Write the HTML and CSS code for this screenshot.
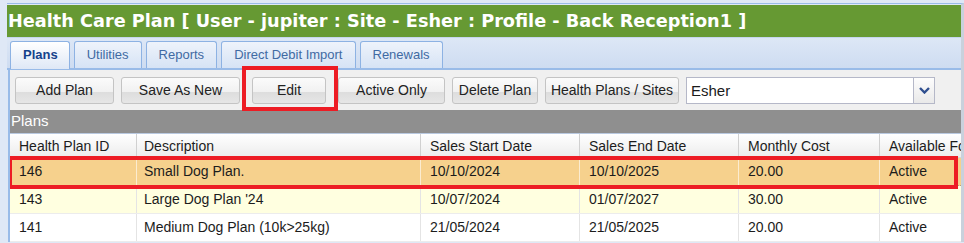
FILE: index.html
```html
<!DOCTYPE html>
<html lang="en">

<head>
  <meta charset="UTF-8">
  <meta name="viewport" content="width=device-width, initial-scale=1.0">
  <title>Health Care Plan</title>
  <link rel="stylesheet" href="styles.css">
</head>

<body>
<div id="hcp-window">
  <div class="title-bar">Health Care Plan [ User - jupiter : Site - Esher : Profile - Back Reception1 ]</div>

  <div class="tab-strip">
    <div class="tab active">Plans</div>
    <div class="tab">Utilities</div>
    <div class="tab">Reports</div>
    <div class="tab">Direct Debit Import</div>
    <div class="tab">Renewals</div>
  </div>

  <div class="panel-body">
    <div class="toolbar">
      <button class="btn btn-add">Add Plan</button>
      <button class="btn btn-save">Save As New</button>
      <button class="btn btn-edit">Edit</button>
      <button class="btn btn-active">Active Only</button>
      <button class="btn btn-delete">Delete Plan</button>
      <button class="btn btn-sites">Health Plans / Sites</button>
      <div class="combo">
        <span class="combo-value">Esher</span>
        <span class="combo-trigger">
          <svg width="11" height="7" viewBox="0 0 11 7"><path d="M1 1 L5.5 5.5 L10 1" fill="none" stroke="#2f4f8f" stroke-width="2.4"/></svg>
        </span>
      </div>
      <!-- highlight around Edit -->
      <div class="mark mark-edit"></div>
    </div>

    <div class="grid-title">Plans</div>

    <div class="grid">
      <div class="grid-row grid-head">
        <div class="cell c-id">Health Plan ID</div>
        <div class="cell c-desc">Description</div>
        <div class="cell c-date">Sales Start Date</div>
        <div class="cell c-date">Sales End Date</div>
        <div class="cell c-cost">Monthly Cost</div>
        <div class="cell c-avail">Available For</div>
      </div>
      <div class="grid-row selected">
        <div class="cell c-id">146</div>
        <div class="cell c-desc">Small Dog Plan.</div>
        <div class="cell c-date">10/10/2024</div>
        <div class="cell c-date">10/10/2025</div>
        <div class="cell c-cost">20.00</div>
        <div class="cell c-avail">Active</div>
      </div>
      <div class="grid-row alt">
        <div class="cell c-id">143</div>
        <div class="cell c-desc">Large Dog Plan '24</div>
        <div class="cell c-date">10/07/2024</div>
        <div class="cell c-date">01/07/2027</div>
        <div class="cell c-cost">30.00</div>
        <div class="cell c-avail">Active</div>
      </div>
      <div class="grid-row">
        <div class="cell c-id">141</div>
        <div class="cell c-desc">Medium Dog Plan (10k&gt;25kg)</div>
        <div class="cell c-date">21/05/2024</div>
        <div class="cell c-date">21/05/2025</div>
        <div class="cell c-cost">20.00</div>
        <div class="cell c-avail">Active</div>
      </div>
      <!-- highlight around selected row -->
      <div class="mark mark-row"></div>
    </div>
  </div>
</div>
</body>

</html>
```

FILE: styles.css
```css
body {
  font-family: "Liberation Sans", Arial, sans-serif;
  margin: 0;
  padding: 3px 0 0 0;
  background-color: #dfe8f6;
  overflow: hidden;
}

:root {
  --color-green: #669933;
  --color-border: #99bbe8;
  --color-tab-text: #416aa3;
  --color-active-tab: #15428b;
  --color-mark: #ed1c24;
}

#hcp-window {
  margin-left: 7px;
  width: 954px;
  border-top: 1px solid var(--color-border);
  border-right: 3px solid #c9d1dc;
}

.title-bar {
  height: 32px;
  line-height: 32px;
  margin-top: 1px;
  padding-left: 1px;
  background-color: var(--color-green);
  color: white;
  font-family: "DejaVu Sans", Tahoma, sans-serif;
  font-weight: bold;
  font-size: 17.7px;
  white-space: nowrap;
  overflow: hidden;
}

.tab-strip {
  display: flex;
  align-items: flex-end;
  gap: 4px;
  height: 30px;
  padding-left: 3px;
  border-top: 1px solid #c5d6ee;
  border-bottom: 2px solid var(--color-border);
  background: linear-gradient(#dde7f6, #cedcf1);
}

.tab {
  height: 26px;
  line-height: 25px;
  padding: 0 12px;
  border: 1px solid #8db2e3;
  border-bottom: none;
  border-radius: 3px 3px 0 0;
  background: linear-gradient(#eef3fb, #d6e3f5);
  color: var(--color-tab-text);
  font-size: 13px;
}

.tab.active {
  height: 27px;
  margin-bottom: -1px;
  background: linear-gradient(#ffffff, #dfe8f6);
  color: var(--color-active-tab);
  font-weight: bold;
  padding: 0 11px 0 12px;
}

.panel-body {
  border-left: 2px solid var(--color-border);
  margin-left: 1px;
}

.toolbar {
  position: relative;
  display: flex;
  align-items: center;
  height: 40px;
  padding-left: 5px;
  background-color: #f0f0f0;
}

.btn {
  height: 27px;
  margin-right: 7px;
  padding: 0 4px;
  border: 1px solid #c4c4c4;
  border-radius: 3px;
  background: linear-gradient(#fbfbfb 0%, #f1f1f1 55%, #dddddd 56%, #e6e6e6 100%);
  font-family: "Liberation Sans", Arial, sans-serif;
  font-size: 14px;
  color: #222;
  white-space: nowrap;
}

.btn-add {
  width: 99px;
}

.btn-save {
  width: 119px;
  margin-right: 12px;
}

.btn-edit {
  width: 74px;
  margin-right: 12px;
}

.btn-active {
  width: 107px;
}

.btn-delete {
  width: 86px;
}

.btn-sites {
  width: 134px;
}

.combo {
  display: flex;
  width: 249px;
  height: 27px;
  box-sizing: border-box;
  border: 1px solid #b5b8c8;
  background-color: white;
}

.combo-value {
  flex: 1;
  padding-left: 4px;
  line-height: 25px;
  font-size: 15px;
  color: #1a1a1a;
}

.combo-trigger {
  display: flex;
  align-items: center;
  justify-content: center;
  width: 20px;
  border-left: 1px solid #b5b8c8;
  background: linear-gradient(#fdfdfd, #e9e9e9);
}

.grid-title {
  height: 23px;
  line-height: 22px;
  padding-left: 1px;
  background-color: #8f8f8f;
  color: white;
  font-size: 15px;
  border-bottom: 1px solid #b9c9e0;
}

.grid {
  position: relative;
  overflow: hidden;
}

.grid-row {
  display: flex;
  height: 27px;
  line-height: 27px;
  font-size: 14px;
  color: #1c1c1c;
  background-color: white;
  border-bottom: 1px solid #ececec;
  white-space: nowrap;
}

.grid-head {
  height: 23px;
  line-height: 24px;
  background: linear-gradient(#ffffff, #ececec);
  border-bottom: 1px solid #d6d6d6;
}

.grid-row.selected {
  background-color: #f6d18d;
  border-bottom: 1px dotted #b8a27a;
}

.grid-row.alt {
  background-color: #ffffe0;
}

.cell {
  box-sizing: border-box;
  padding-left: 9px;
  border-right: 1px solid #e4e4e4;
  flex-shrink: 0;
  overflow: hidden;
}

.grid-head .cell {
  border-right-color: #d0d0d0;
}

.selected .cell {
  border-right-color: #fbecd0;
}

.c-id {
  width: 127px;
}

.c-desc {
  width: 284px;
  padding-left: 7px;
}

.c-date {
  width: 159px;
}

.c-cost {
  width: 141px;
}

.c-avail {
  width: 150px;
}

.mark {
  position: absolute;
  border: 4px solid var(--color-mark);
  box-sizing: border-box;
}

.mark-edit {
  left: 232px;
  top: -4px;
  width: 96px;
  height: 45px;
}

.mark-row {
  left: -2px;
  top: 22px;
  width: 950px;
  height: 33px;
}
```
